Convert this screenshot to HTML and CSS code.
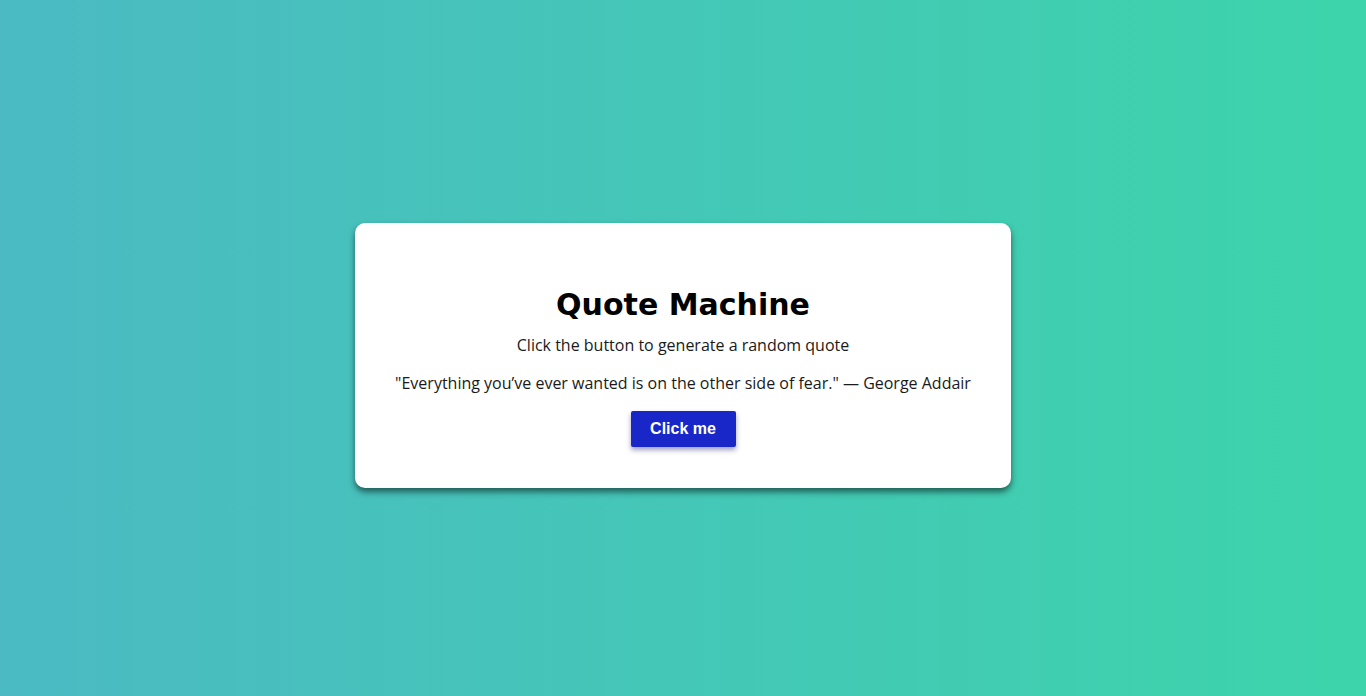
FILE: index.html
```html
<!DOCTYPE html>
<html lang="en">
<head>
<meta charset="utf-8">
<title>Quote Machine</title>
<link rel="stylesheet" href="styles.css">
</head>
<body>
<main class="page">
  <section class="card">
    <h1 class="title">Quote Machine</h1>
    <p class="subtitle">Click the button to generate a random quote</p>
    <p class="quote">"Everything you’ve ever wanted is on the other side of fear." — George Addair</p>
    <button class="btn" type="button">Click me</button>
  </section>
</main>
</body>
</html>
```
FILE: styles.css
```css
html, body {
  margin: 0;
  padding: 0;
}
body {
  font-family: "Open Sans", "Noto Sans", sans-serif;
  color: #1a1a1a;
}
.page {
  height: 696px;
  box-sizing: border-box;
  background: linear-gradient(to right, #4bbac3, #3dd4ab);
  display: flex;
  justify-content: center;
  align-items: flex-start;
  padding-top: 223px;
}
.card {
  width: 656px;
  box-sizing: border-box;
  background: #fff;
  border-radius: 10px;
  box-shadow: 0 4px 6px rgba(20, 60, 55, 0.75);
  display: flex;
  flex-direction: column;
  align-items: center;
  padding: 63px 20px 41px;
}
.title {
  margin: 0;
  font-family: "DejaVu Sans", sans-serif;
  font-weight: bold;
  font-size: 30px;
  line-height: 38px;
  color: #000;
  letter-spacing: 0;
}
.subtitle {
  margin: 9px 0 0;
  font-size: 16px;
  line-height: 24px;
}
.quote {
  margin: 14px 0 0;
  font-size: 16px;
  line-height: 24px;
}
.btn {
  margin-top: 16px;
  width: 105px;
  height: 36px;
  border: none;
  border-radius: 2px;
  background: #1a27c8;
  color: #fff;
  font-family: "Liberation Sans", Arial, sans-serif;
  font-weight: bold;
  font-size: 16px;
  box-shadow: 0 3px 5px rgba(40, 40, 120, 0.45);
  padding: 0;
}
```
